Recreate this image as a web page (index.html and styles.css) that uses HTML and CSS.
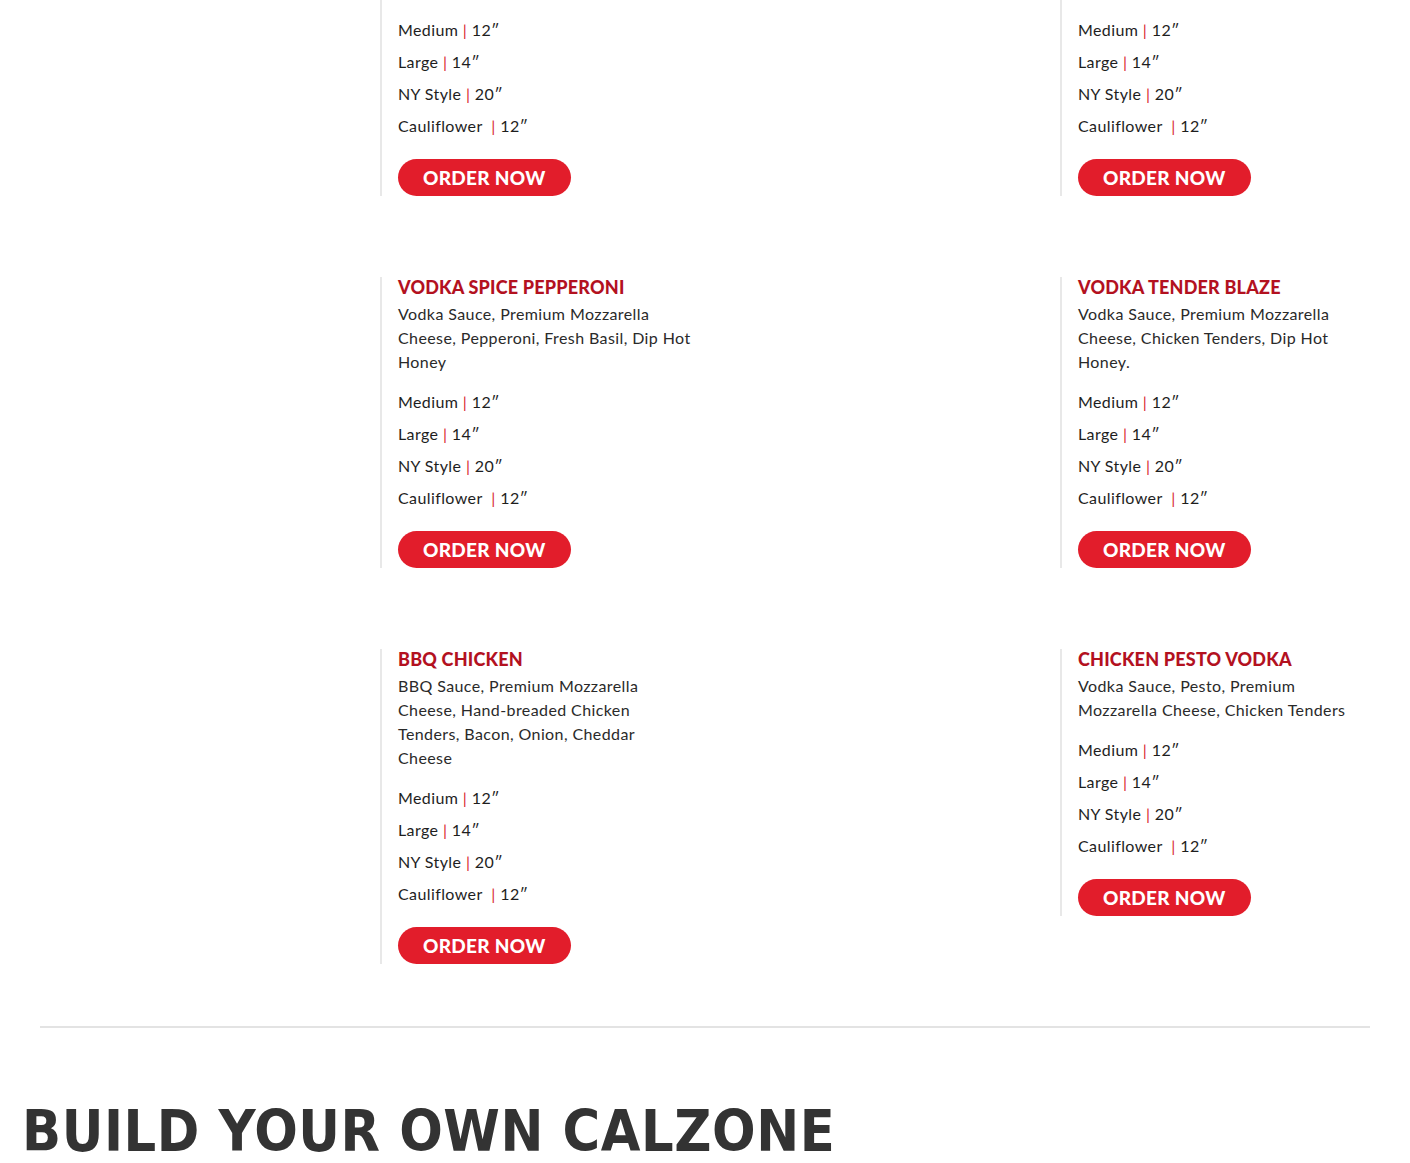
FILE: index.html
```
<!DOCTYPE html>
<html lang="en">
<head>
    <meta charset="UTF-8">
    <meta name="viewport" content="width=device-width, initial-scale=1.0">
    <title>Menu - Specialty Pizzas</title>
    <link rel="stylesheet" href="styles.css">
</head>
<body>
    <div class="menu">
        <div class="menu-grid">
            <div class="menu-item">
                <div class="menu-photo"></div>
                <div class="menu-card">
                    <h3>Vodka Classic</h3>
                    <p class="desc">Vodka Sauce, Premium Mozzarella<br>Cheese, Fresh Basil, Parmesan<br>Cheese</p>
                    <ul class="sizes">
                        <li>Medium <span class="sep">|</span> 12″</li>
                        <li>Large <span class="sep">|</span> 14″</li>
                        <li>NY Style <span class="sep">|</span> 20″</li>
                        <li>Cauliflower&nbsp; <span class="sep">|</span> 12″</li>
                    </ul>
                    <a href="#" class="order-btn">Order Now</a>
                </div>
            </div>
            <div class="menu-item">
                <div class="menu-photo"></div>
                <div class="menu-card">
                    <h3>Vodka Meatball</h3>
                    <p class="desc">Vodka Sauce, Premium Mozzarella<br>Cheese, Meatballs, Ricotta, Fresh<br>Basil</p>
                    <ul class="sizes">
                        <li>Medium <span class="sep">|</span> 12″</li>
                        <li>Large <span class="sep">|</span> 14″</li>
                        <li>NY Style <span class="sep">|</span> 20″</li>
                        <li>Cauliflower&nbsp; <span class="sep">|</span> 12″</li>
                    </ul>
                    <a href="#" class="order-btn">Order Now</a>
                </div>
            </div>

            <div class="menu-item">
                <div class="menu-photo"></div>
                <div class="menu-card">
                    <h3>Vodka Spice Pepperoni</h3>
                    <p class="desc">Vodka Sauce, Premium Mozzarella<br>Cheese, Pepperoni, Fresh Basil, Dip Hot<br>Honey</p>
                    <ul class="sizes">
                        <li>Medium <span class="sep">|</span> 12″</li>
                        <li>Large <span class="sep">|</span> 14″</li>
                        <li>NY Style <span class="sep">|</span> 20″</li>
                        <li>Cauliflower&nbsp; <span class="sep">|</span> 12″</li>
                    </ul>
                    <a href="#" class="order-btn">Order Now</a>
                </div>
            </div>
            <div class="menu-item">
                <div class="menu-photo"></div>
                <div class="menu-card">
                    <h3>Vodka Tender Blaze</h3>
                    <p class="desc">Vodka Sauce, Premium Mozzarella<br>Cheese, Chicken Tenders, Dip Hot<br>Honey.</p>
                    <ul class="sizes">
                        <li>Medium <span class="sep">|</span> 12″</li>
                        <li>Large <span class="sep">|</span> 14″</li>
                        <li>NY Style <span class="sep">|</span> 20″</li>
                        <li>Cauliflower&nbsp; <span class="sep">|</span> 12″</li>
                    </ul>
                    <a href="#" class="order-btn">Order Now</a>
                </div>
            </div>

            <div class="menu-item">
                <div class="menu-photo"></div>
                <div class="menu-card">
                    <h3>BBQ Chicken</h3>
                    <p class="desc">BBQ Sauce, Premium Mozzarella<br>Cheese, Hand-breaded Chicken<br>Tenders, Bacon, Onion, Cheddar<br>Cheese</p>
                    <ul class="sizes">
                        <li>Medium <span class="sep">|</span> 12″</li>
                        <li>Large <span class="sep">|</span> 14″</li>
                        <li>NY Style <span class="sep">|</span> 20″</li>
                        <li>Cauliflower&nbsp; <span class="sep">|</span> 12″</li>
                    </ul>
                    <a href="#" class="order-btn">Order Now</a>
                </div>
            </div>
            <div class="menu-item">
                <div class="menu-photo"></div>
                <div class="menu-card">
                    <h3>Chicken Pesto Vodka</h3>
                    <p class="desc">Vodka Sauce, Pesto, Premium<br>Mozzarella Cheese, Chicken Tenders</p>
                    <ul class="sizes">
                        <li>Medium <span class="sep">|</span> 12″</li>
                        <li>Large <span class="sep">|</span> 14″</li>
                        <li>NY Style <span class="sep">|</span> 20″</li>
                        <li>Cauliflower&nbsp; <span class="sep">|</span> 12″</li>
                    </ul>
                    <a href="#" class="order-btn">Order Now</a>
                </div>
            </div>
        </div>
        <hr class="divider">
    </div>

    <section class="calzone">
        <h2>Build Your Own Calzone</h2>
    </section>
</body>
</html>
```

FILE: styles.css
```
body {
    font-family: 'Lato', 'Liberation Sans', sans-serif;
    margin: 0;
    background: #fff;
    color: #222;
}
.menu {
    padding: 0 40px;
}
.menu-grid {
    display: grid;
    grid-template-columns: 650px 650px;
    column-gap: 30px;
    row-gap: 81px;
    align-items: start;
    margin-top: -95px;
}
.menu-item {
    display: grid;
    grid-template-columns: 340px 1fr;
}
.menu-card {
    border-left: 2px solid #e8e8e8;
    padding-left: 16px;
}
.menu-card h3 {
    margin: 0;
    font-size: 18px;
    line-height: 20px;
    font-weight: 900;
    text-transform: uppercase;
    color: #b3111f;
    letter-spacing: 0.2px;
}
.desc {
    margin: 5px 0 0;
    font-size: 16px;
    line-height: 24px;
    letter-spacing: 0.4px;
    white-space: nowrap;
    color: #2a2a2a;
}
.sizes {
    list-style: none;
    margin: 12px 0 0;
    padding: 0;
}
.sizes li {
    font-size: 16px;
    line-height: 32px;
    letter-spacing: 0.4px;
    color: #1e1e1e;
}
.sep {
    color: #d8232f;
}
.order-btn {
    display: inline-block;
    margin-top: 17px;
    padding: 0 25px;
    height: 37px;
    line-height: 37px;
    border-radius: 20px;
    background: #e21d2b;
    color: #fff;
    font-size: 19px;
    font-weight: 900;
    text-transform: uppercase;
    text-decoration: none;
    letter-spacing: 0.3px;
}
.divider {
    border: none;
    border-top: 2px solid #e3e3e3;
    margin: 62px 0 0;
}
.calzone {
    padding: 68px 22px 0;
}
.calzone h2 {
    margin: 0;
    font-family: 'DejaVu Sans', 'Liberation Sans', sans-serif;
    font-stretch: condensed;
    font-size: 57px;
    line-height: 70px;
    font-weight: bold;
    text-transform: uppercase;
    letter-spacing: 0.6px;
    color: #333;
}
```
